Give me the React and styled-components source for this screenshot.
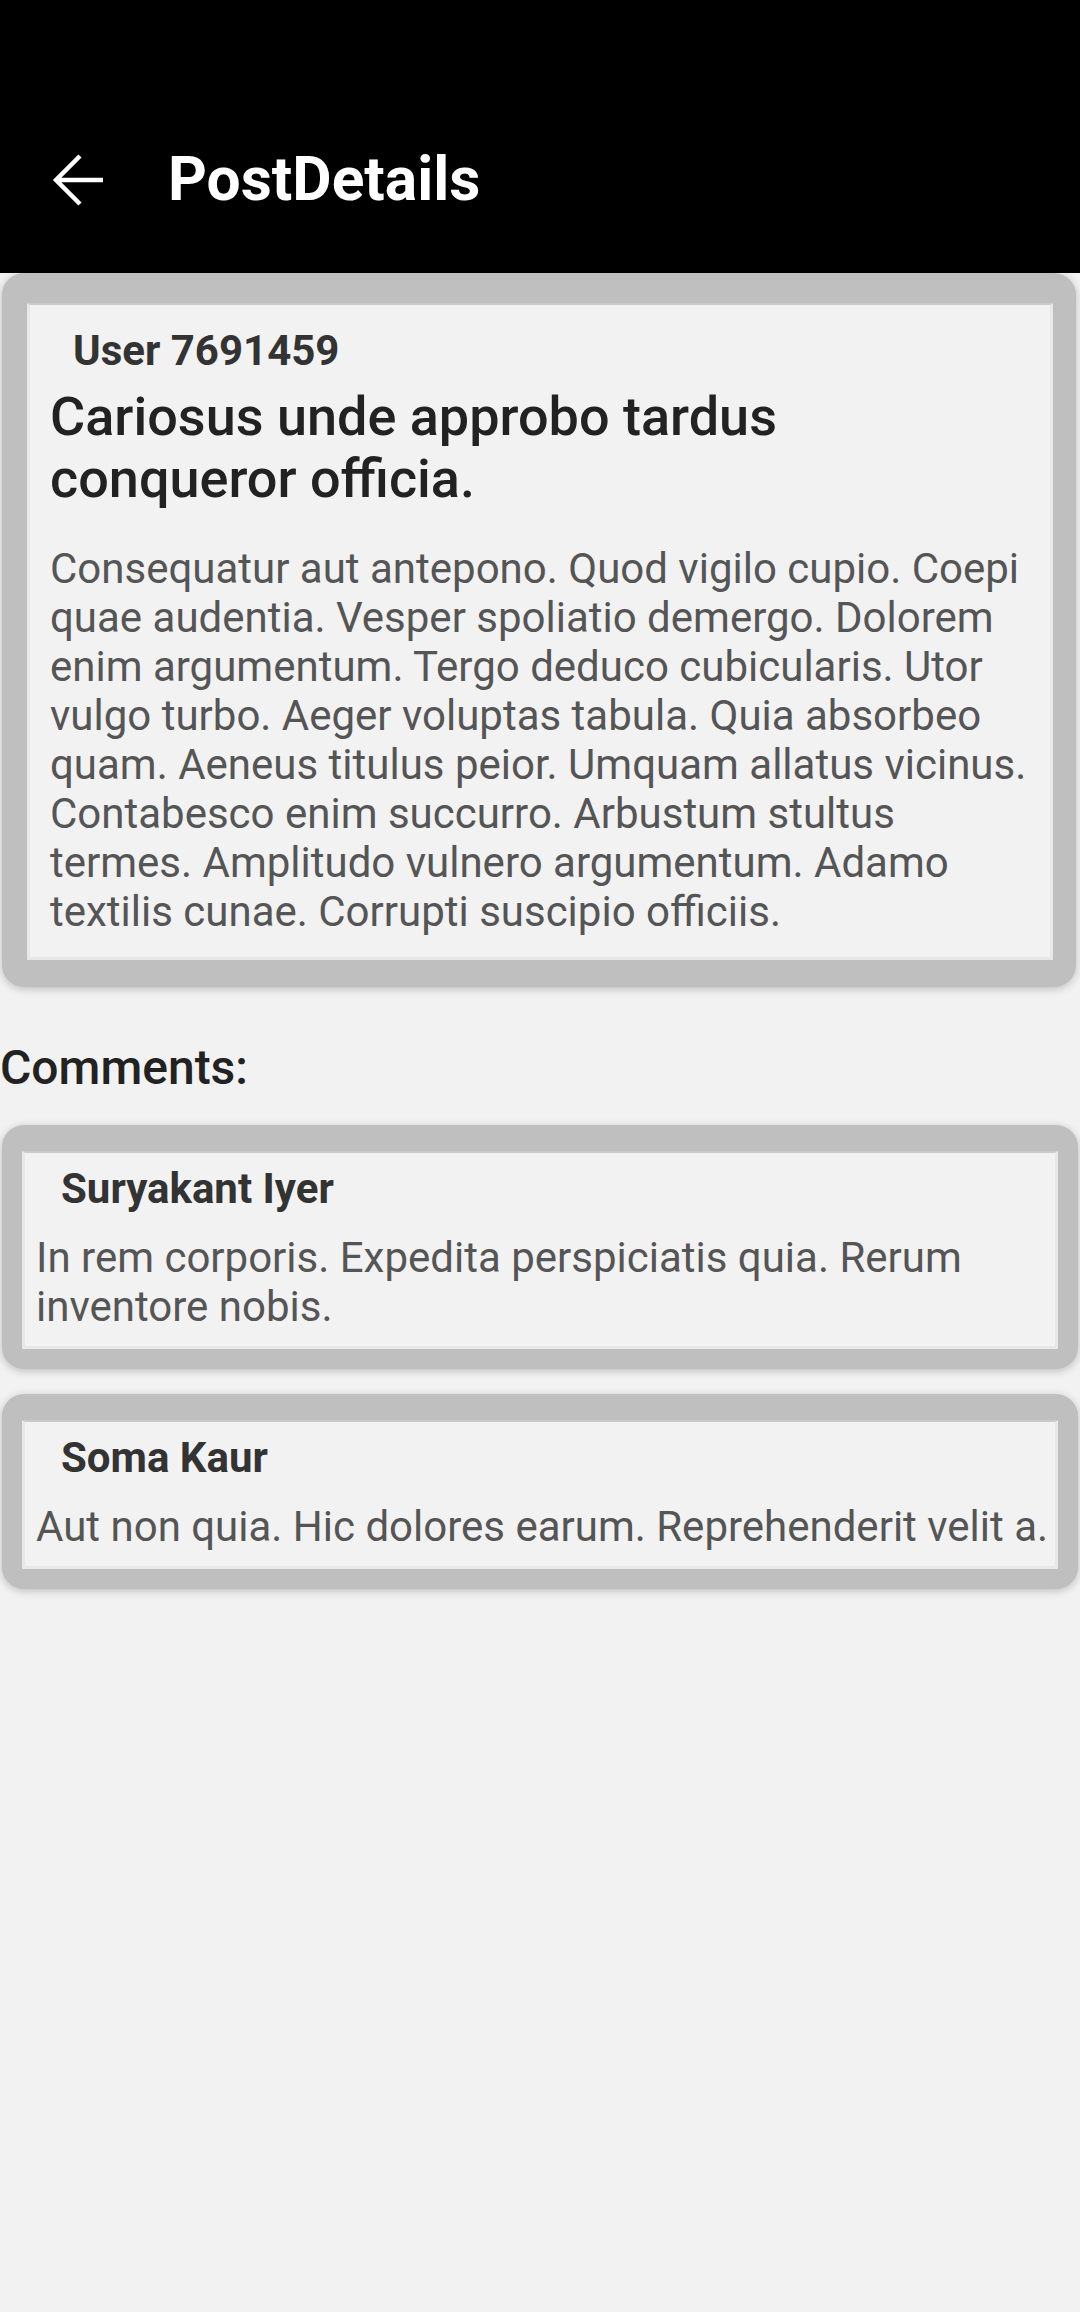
import React from 'react';
import styled, { createGlobalStyle } from 'styled-components';

const GlobalStyle = createGlobalStyle`
  body {
    margin: 0;
    background: #f2f2f2;
    font-family: Roboto, "Liberation Sans", sans-serif;
  }
`;

const Page = styled.div`
  min-height: 2312px;
  background: #f2f2f2;
`;

const Header = styled.header`
  height: 273px;
  box-sizing: border-box;
  padding-top: 86px;
  background: #000;
  display: flex;
  align-items: center;
`;

const BackButton = styled.button`
  background: none;
  border: none;
  padding: 0;
  margin-left: 52px;
  width: 52px;
  height: 52px;
  display: flex;
  align-items: center;
  justify-content: center;
  cursor: pointer;
`;

const HeaderTitle = styled.h1`
  margin: 0 0 0 64px;
  color: #fff;
  font-size: 60.5px;
  font-weight: 700;
  line-height: 70px;
`;

const Card = styled.div`
  margin: ${p => (p.$post ? '0 4px 0 2px' : '0 2px')};
  padding: ${p => (p.$post ? '30px 23px 27px 25px' : '26px 20px 20px 20px')};
  background: #bfbfbf;
  border-radius: 22px;
  box-shadow: 0 2px 8px rgba(0, 0, 0, 0.22);
`;

const Panel = styled.div`
  background: #f2f2f2;
  border: 3px solid #e8e8e8;
  border-top: 2px solid #cacaca;
  padding: ${p => (p.$post ? '21px 17px 21px 20px' : '11px 0 15px 11px')};
`;

const Author = styled.div`
  margin-left: ${p => (p.$post ? '23px' : '25px')};
  color: #333;
  font-size: 42px;
  font-weight: 700;
  line-height: 49px;
`;

const PostTitle = styled.h2`
  margin: 11px 0 0;
  padding-right: 80px;
  color: #222;
  font-size: 54px;
  font-weight: 500;
  line-height: 62px;
`;

const Body = styled.p`
  margin: ${p => (p.$post ? '34px 0 0' : '20px 0 0')};
  color: #555;
  font-size: 42px;
  line-height: 49px;
`;

const CommentsLabel = styled.h3`
  margin: 53px 0 29px;
  color: #222;
  font-size: 48px;
  font-weight: 500;
  line-height: 56px;
`;

const CommentList = styled.div`
  display: flex;
  flex-direction: column;
  gap: 25px;
`;

const comments = [
  {
    id: 1,
    name: 'Suryakant Iyer',
    body: 'In rem corporis. Expedita perspiciatis quia. Rerum inventore nobis.',
  },
  {
    id: 2,
    name: 'Soma Kaur',
    body: 'Aut non quia. Hic dolores earum. Reprehenderit velit a.',
  },
];

const BackArrow = () => (
  <svg width="52" height="52" viewBox="0 0 52 52" fill="none">
    <path d="M4 26H51M28 2L4 26L28 50" stroke="#fff" strokeWidth="4.5" />
  </svg>
);

const App = () => {
  return (
    <Page>
      <GlobalStyle />
      <Header>
        <BackButton aria-label="Back">
          <BackArrow />
        </BackButton>
        <HeaderTitle>PostDetails</HeaderTitle>
      </Header>

      <Card $post>
        <Panel $post>
          <Author $post>User 7691459</Author>
          <PostTitle>Cariosus unde approbo tardus conqueror officia.</PostTitle>
          <Body $post>
            Consequatur aut antepono. Quod vigilo cupio. Coepi quae audentia. Vesper spoliatio
            demergo. Dolorem enim argumentum. Tergo deduco cubicularis. Utor vulgo turbo. Aeger
            voluptas tabula. Quia absorbeo quam. Aeneus titulus peior. Umquam allatus vicinus.
            Contabesco enim succurro. Arbustum stultus termes. Amplitudo vulnero argumentum. Adamo
            textilis cunae. Corrupti suscipio officiis.
          </Body>
        </Panel>
      </Card>

      <CommentsLabel>Comments:</CommentsLabel>

      <CommentList>
        {comments.map(c => (
          <Card key={c.id}>
            <Panel>
              <Author>{c.name}</Author>
              <Body>{c.body}</Body>
            </Panel>
          </Card>
        ))}
      </CommentList>
    </Page>
  );
};

export default App;
